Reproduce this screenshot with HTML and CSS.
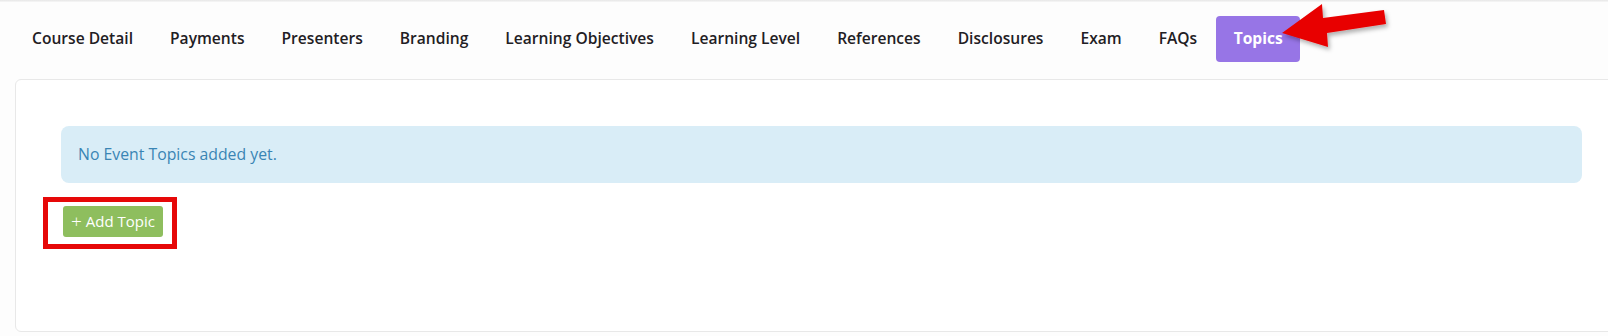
FILE: index.html
```html
<!DOCTYPE html>
<html>
<head>
    <meta charset="UTF-8">
    <meta name="viewport" content="width=device-width, initial-scale=1.0">
    <title>Course Topics</title>
    <link rel="stylesheet" href="styles.css">
</head>
<body>
    <div class="topbar"></div>
    <nav class="tabs">
        <a class="tab">Course Detail</a>
        <a class="tab">Payments</a>
        <a class="tab">Presenters</a>
        <a class="tab">Branding</a>
        <a class="tab">Learning Objectives</a>
        <a class="tab">Learning Level</a>
        <a class="tab">References</a>
        <a class="tab">Disclosures</a>
        <a class="tab">Exam</a>
        <a class="tab">FAQs</a>
        <a class="tab active">Topics</a>
    </nav>

    <!-- annotation arrow pointing at the active tab -->
    <svg class="arrow" width="120" height="60" viewBox="0 0 120 60">
        <defs>
            <filter id="shade" x="-20%" y="-20%" width="140%" height="140%">
                <feDropShadow dx="2" dy="3" stdDeviation="2" flood-color="#000" flood-opacity="0.3"/>
            </filter>
        </defs>
        <polygon points="2,33 42,4 43,18 104,10 106,24 47,33 48,47" fill="#e80606" filter="url(#shade)"/>
    </svg>

    <div class="card">
        <div class="alert">No Event Topics added yet.</div>
        <div class="actions">
            <button class="btn-add"><span class="plus">+</span> Add Topic</button>
            <div class="highlight"></div>
        </div>
    </div>
</body>
</html>
```

FILE: styles.css
```css
body {
    margin: 0;
    font-family: 'Open Sans', 'Noto Sans', sans-serif;
    background: #fdfdfd;
    color: #1f2024;
    position: relative;
    overflow: hidden;
    height: 336px;
}

.topbar {
    height: 2px;
    background: linear-gradient(#e6e6e6, #f7f7f7);
}

/* Tabs */
.tabs {
    display: flex;
    margin: 14px 0 0 13.5px;
}

.tab {
    display: block;
    padding: 0 18.5px;
    height: 46px;
    line-height: 44px;
    font-size: 15.6px;
    font-weight: 600;
    color: #1f2024;
    border-radius: 4px;
    cursor: pointer;
}

.tab.active {
    background: #9775e6;
    color: #fff;
    font-weight: 700;
    padding: 0 17px 0 18px;
}

.arrow {
    position: absolute;
    left: 1280px;
    top: 0;
}

/* Card */
.card {
    margin: 17px -20px 0 15px;
    background: #fff;
    border: 1px solid #e8e8e8;
    border-radius: 6px;
    padding: 46px 45px 0 45px;
    box-sizing: border-box;
    height: 253px;
}

.alert {
    background: #d9edf7;
    color: #3a85b4;
    font-size: 15.8px;
    line-height: 25px;
    padding: 16px 17px;
    border-radius: 8px;
}

.actions {
    position: relative;
    margin-top: 23px;
    padding-left: 2px;
}

.btn-add {
    width: 100px;
    height: 31px;
    background: #8ebe5e;
    color: #fff;
    border: none;
    border-radius: 3px;
    font-family: 'Open Sans', 'Noto Sans', sans-serif;
    font-size: 15px;
    padding: 0 0 1px 0;
    cursor: pointer;
}

.plus {
    font-size: 19px;
    font-weight: 300;
    line-height: 1;
    vertical-align: -1px;
}

.highlight {
    position: absolute;
    left: -18px;
    top: -9px;
    width: 124px;
    height: 42px;
    border: 5px solid #e60808;
    pointer-events: none;
}
```
